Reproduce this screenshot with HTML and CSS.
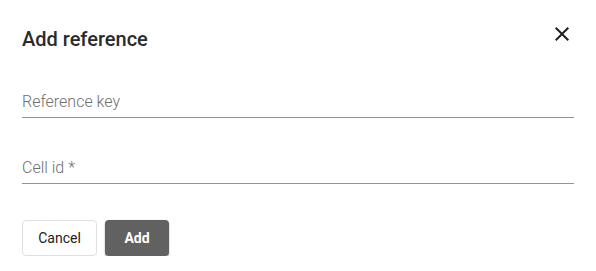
FILE: index.html
```html
<!DOCTYPE html>
<html lang="en">

<head>
    <meta charset="UTF-8">
    <meta name="viewport" content="width=device-width, initial-scale=1.0">
    <title>add reference</title>
    <link rel="stylesheet" href="styles.css">
</head>

<body>
    <form class="ref_dialog" id="ref_form">
        <div class="head_div">
            <h2 class="head">Add reference</h2>
            <button type="button" class="close_btn" aria-label="Close">
                <svg viewBox="0 0 24 24" width="24" height="24">
                    <path d="M19 6.41L17.59 5 12 10.59 6.41 5 5 6.41 10.59 12 5 17.59 6.41 19 12 13.41 17.59 19 19 17.59 13.41 12z" />
                </svg>
            </button>
        </div>
        <div class="form-group first">
            <input type="text" class="form-control" id="refKey" placeholder="Reference key" />
        </div>
        <div class="form-group">
            <input type="text" class="form-control" id="cellId" placeholder="Cell id *" />
        </div>
        <div class="actions">
            <button type="button" class="cancel_btn">Cancel</button>
            <button type="submit" class="add_btn">Add</button>
        </div>
    </form>
</body>

</html>
```

FILE: styles.css
```css
body {
    margin: 0;
    padding: 0;
    background-color: #fff;
    font-family: Roboto, "Liberation Sans", sans-serif;
    color: #212121;
}

.ref_dialog {
    display: flex;
    flex-direction: column;
    padding: 22px 22px 0 22px;
}

.head_div {
    display: flex;
    justify-content: space-between;
    align-items: flex-start;
}

.head {
    margin: 5px 0 0 0;
    font-size: 20px;
    line-height: 24px;
    font-weight: 500;
    color: #2b2b2b;
}

.close_btn {
    width: 24px;
    height: 24px;
    padding: 0;
    border: none;
    background: none;
    cursor: pointer;
}

.close_btn svg {
    display: block;
    fill: #212121;
}

.form-group {
    margin-top: 40px;
}

.form-group.first {
    margin-top: 41px;
}

.form-control {
    display: block;
    width: 100%;
    box-sizing: content-box;
    height: 20px;
    padding: 0 0 5px 0;
    margin: 0;
    border: none;
    border-bottom: 1px solid rgba(0, 0, 0, 0.42);
    font-family: inherit;
    font-size: 16px;
    font-weight: 300;
    line-height: 20px;
    color: #212121;
    outline: none;
}

.form-control::placeholder {
    color: #6f6f6f;
}

.actions {
    display: flex;
    gap: 8px;
    margin-top: 36px;
}

.cancel_btn,
.add_btn {
    height: 36px;
    border-radius: 4px;
    font-family: inherit;
    font-size: 14px;
    cursor: pointer;
}

.cancel_btn {
    width: 75px;
    background-color: #fff;
    border: 1px solid #e0e0e0;
    color: #212121;
    font-weight: 400;
}

.add_btn {
    width: 64px;
    background-color: #616161;
    border: none;
    color: #fff;
    font-weight: 700;
    box-shadow: 0 2px 2px rgba(0, 0, 0, 0.24), 0 0 2px rgba(0, 0, 0, 0.12);
}
```
